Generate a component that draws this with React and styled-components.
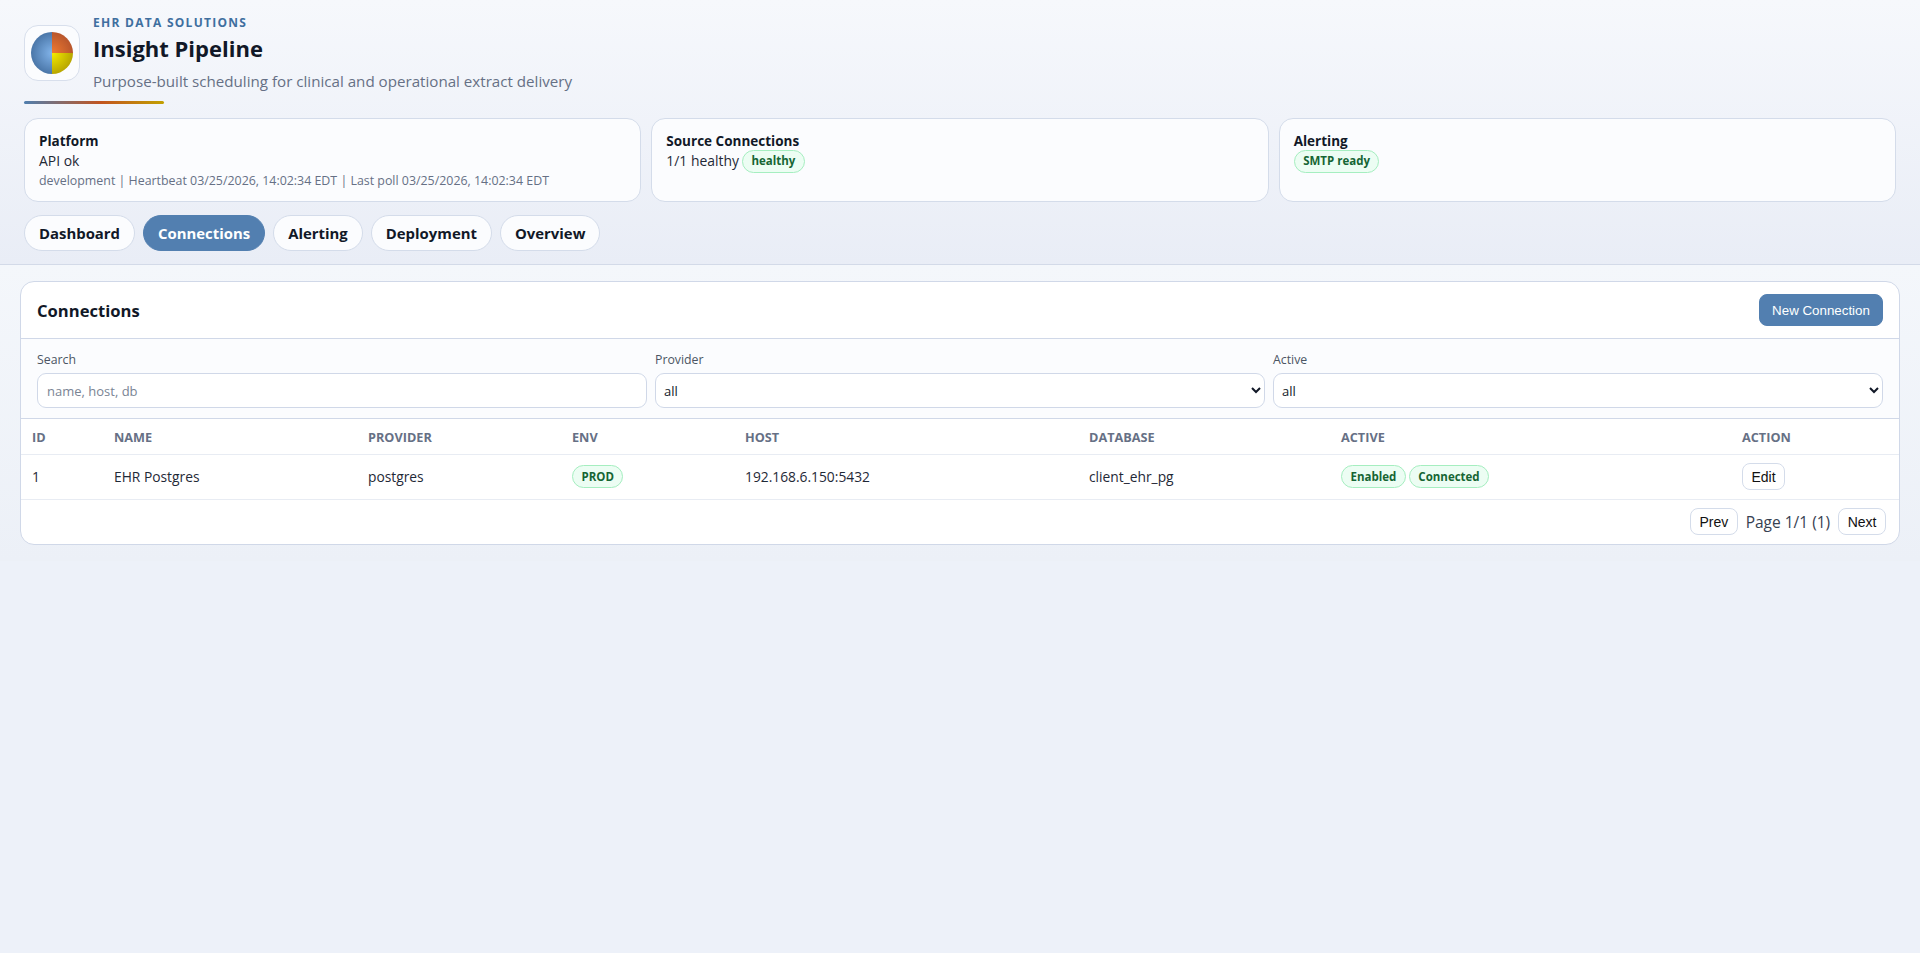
import styled, { createGlobalStyle } from "styled-components";

const FONT = `"Open Sans", "Noto Sans", Arial, sans-serif`;

const GlobalStyle = createGlobalStyle`
  html, body {
    margin: 0;
    min-height: 100%;
  }
  * {
    box-sizing: border-box;
  }
  body {
    min-height: 953px;
    background: #edf1f9;
    color: #111827;
    font-family: ${FONT};
    font-size: 14px;
  }
`;

const Header = styled.header`
  height: 265px;
  padding: 14px 24px 0;
  border-bottom: 1px solid #d3dae8;
  background: linear-gradient(180deg, #f6f8fc 0%, #e9edf6 100%);
`;

const Brand = styled.div`
  display: flex;
  align-items: center;
  gap: 13px;
`;

const LogoTile = styled.div`
  width: 56px;
  height: 56px;
  display: flex;
  align-items: center;
  justify-content: center;
  flex: none;
  background: #fbfcfe;
  border: 1px solid #d8dfec;
  border-radius: 14px;
`;

const Eyebrow = styled.div`
  font-size: 12px;
  line-height: 18px;
  font-weight: 700;
  letter-spacing: 1.27px;
  color: #3f6f9f;
`;

const Title = styled.h1`
  margin: 0;
  font-size: 22px;
  line-height: 32px;
  font-weight: 700;
  color: #111827;
`;

const Subtitle = styled.div`
  margin-top: 7px;
  font-size: 15.15px;
  line-height: 20px;
  color: #667085;
`;

const Accent = styled.div`
  width: 140px;
  height: 3px;
  margin-top: 10px;
  border-radius: 99px;
  background: linear-gradient(90deg, #4f7eae 0%, #c2541f 55%, #c2a000 100%);
`;

const StatusRow = styled.div`
  display: grid;
  grid-template-columns: repeat(3, 1fr);
  gap: 10px;
  margin-top: 14px;
`;

const StatusCard = styled.section`
  height: 84px;
  padding: 12px 14px;
  background: #fbfcfe;
  border: 1px solid #d4dcea;
  border-radius: 14px;
`;

const CardTitle = styled.div`
  font-size: 13.5px;
  line-height: 20px;
  font-weight: 700;
`;

const CardLine = styled.div`
  display: flex;
  align-items: center;
  gap: 3px;
  height: 20px;
  font-size: 13.9px;
  line-height: 20px;
  color: #1f2937;
`;

const CardMeta = styled.div`
  font-size: 12.4px;
  line-height: 20px;
  color: #667085;
`;

const Badge = styled.span`
  display: inline-flex;
  align-items: center;
  height: 23px;
  padding: 0 8.5px;
  background: #ecfdf3;
  border: 1px solid #a5eec0;
  border-radius: 99px;
  font-size: 11.5px;
  font-weight: 700;
  color: #166534;
`;

const Tabs = styled.nav`
  display: flex;
  gap: 8px;
  margin-top: 13px;
`;

const Tab = styled.button`
  height: 36px;
  padding: 0 14px;
  background: ${(p) => (p.$active ? "#527fb0" : "#fbfcfe")};
  border: 1px solid ${(p) => (p.$active ? "#527fb0" : "#d4dcea")};
  border-radius: 18px;
  font-family: ${FONT};
  font-size: 14.9px;
  font-weight: 700;
  color: ${(p) => (p.$active ? "#ffffff" : "#111827")};
`;

const Main = styled.main`
  padding: 16px 20px;
  background: linear-gradient(180deg, #f4f7fb 0%, #ecf0f7 100%);
`;

const Panel = styled.section`
  background: #ffffff;
  border: 1px solid #d0d8e8;
  border-radius: 14px;
  overflow: hidden;
`;

const PanelHead = styled.div`
  height: 57px;
  display: flex;
  align-items: center;
  justify-content: space-between;
  padding: 0 16px;
  border-bottom: 1px solid #d0d8e8;
`;

const PanelTitle = styled.h2`
  margin: 0;
  font-size: 16.6px;
  font-weight: 700;
`;

const PrimaryButton = styled.button`
  width: 124px;
  height: 32px;
  padding: 0;
  background: #527fb0;
  border: 1px solid #527fb0;
  border-radius: 8px;
  font-family: "Liberation Sans", Arial, sans-serif;
  font-size: 13.33px;
  color: #ffffff;
`;

const Filters = styled.div`
  height: 80px;
  display: grid;
  grid-template-columns: repeat(3, 1fr);
  gap: 8px;
  padding: 11px 16px 0;
  background: #fbfcfe;
  border-bottom: 1px solid #d0d8e8;
`;

const Field = styled.label`
  display: flex;
  flex-direction: column;
  gap: 3px;
  font-size: 12.3px;
  line-height: 20px;
  color: #4b5563;
`;

const TextInput = styled.input`
  height: 35px;
  padding: 0 9px;
  background: #ffffff;
  border: 1px solid #d0d8e8;
  border-radius: 9px;
  font-family: ${FONT};
  font-size: 13px;
  outline: none;
  &::placeholder {
    color: #7a8494;
  }
`;

const Select = styled.select`
  height: 35px;
  padding: 0 4px;
  background: #ffffff;
  border: 1px solid #d0d8e8;
  border-radius: 9px;
  font-family: ${FONT};
  font-size: 13px;
  color: #111827;
`;

const Table = styled.table`
  width: 100%;
  table-layout: fixed;
  border-collapse: collapse;
`;

const Th = styled.th`
  height: 35px;
  padding: 2px 11px 0;
  text-align: left;
  font-size: 12.7px;
  font-weight: 700;
  color: #667085;
  text-transform: uppercase;
  border-bottom: 1px solid #e8ecf3;
`;

const Td = styled.td`
  height: 45px;
  padding: 0 11px;
  font-size: 13.8px;
  color: #1f2937;
  border-bottom: 1px solid #e8ecf3;
`;

const BadgeGroup = styled.div`
  display: flex;
  gap: 3px;
`;

const SmallButton = styled.button`
  height: 27px;
  padding: 0 8.5px;
  background: #ffffff;
  border: 1px solid #d4dcea;
  border-radius: 8px;
  font-family: "Liberation Sans", Arial, sans-serif;
  font-size: 14px;
  color: #111111;
`;

const Pager = styled.div`
  height: 44px;
  display: flex;
  align-items: center;
  justify-content: flex-end;
  gap: 8px;
  padding: 0 13px;
  font-size: 15.5px;
  color: #374151;
`;

function Logo() {
  return (
    <svg width="44" height="44" viewBox="0 0 44 44">
      <defs>
        <radialGradient id="blue" gradientUnits="userSpaceOnUse" cx="22" cy="22" r="21">
          <stop offset="0" stopColor="#82b4ea" />
          <stop offset="1" stopColor="#4a76a8" />
        </radialGradient>
        <radialGradient id="orange" gradientUnits="userSpaceOnUse" cx="22" cy="22" r="21">
          <stop offset="0" stopColor="#f07a30" />
          <stop offset="1" stopColor="#b8562c" />
        </radialGradient>
        <radialGradient id="yellow" gradientUnits="userSpaceOnUse" cx="22" cy="22" r="21">
          <stop offset="0" stopColor="#f4ec00" />
          <stop offset="1" stopColor="#b8a600" />
        </radialGradient>
      </defs>
      <path d="M22 1 A21 21 0 0 0 22 43 Z" fill="url(#blue)" />
      <path d="M22 1 A21 21 0 0 1 43 22 L22 22 Z" fill="url(#orange)" />
      <path d="M43 22 A21 21 0 0 1 22 43 L22 22 Z" fill="url(#yellow)" />
    </svg>
  );
}

const columns = [82, 254, 204, 173, 344, 252, 401, 168];

export default function App() {
  return (
    <>
      <GlobalStyle />
      <Header>
        <Brand>
          <LogoTile>
            <Logo />
          </LogoTile>
          <div>
            <Eyebrow>EHR DATA SOLUTIONS</Eyebrow>
            <Title>Insight Pipeline</Title>
            <Subtitle>Purpose-built scheduling for clinical and operational extract delivery</Subtitle>
          </div>
        </Brand>
        <Accent />
        <StatusRow>
          <StatusCard>
            <CardTitle>Platform</CardTitle>
            <CardLine>API ok</CardLine>
            <CardMeta>development | Heartbeat 03/25/2026, 14:02:34 EDT | Last poll 03/25/2026, 14:02:34 EDT</CardMeta>
          </StatusCard>
          <StatusCard>
            <CardTitle>Source Connections</CardTitle>
            <CardLine>
              1/1 healthy <Badge>healthy</Badge>
            </CardLine>
          </StatusCard>
          <StatusCard>
            <CardTitle>Alerting</CardTitle>
            <CardLine>
              <Badge>SMTP ready</Badge>
            </CardLine>
          </StatusCard>
        </StatusRow>
        <Tabs>
          <Tab>Dashboard</Tab>
          <Tab $active>Connections</Tab>
          <Tab>Alerting</Tab>
          <Tab>Deployment</Tab>
          <Tab>Overview</Tab>
        </Tabs>
      </Header>
      <Main>
        <Panel>
          <PanelHead>
            <PanelTitle>Connections</PanelTitle>
            <PrimaryButton>New Connection</PrimaryButton>
          </PanelHead>
          <Filters>
            <Field>
              Search
              <TextInput placeholder="name, host, db" />
            </Field>
            <Field>
              Provider
              <Select>
                <option>all</option>
              </Select>
            </Field>
            <Field>
              Active
              <Select>
                <option>all</option>
              </Select>
            </Field>
          </Filters>
          <Table>
            <colgroup>
              {columns.map((w, i) => (
                <col key={i} width={w} />
              ))}
            </colgroup>
            <thead>
              <tr>
                <Th>Id</Th>
                <Th>Name</Th>
                <Th>Provider</Th>
                <Th>Env</Th>
                <Th>Host</Th>
                <Th>Database</Th>
                <Th>Active</Th>
                <Th>Action</Th>
              </tr>
            </thead>
            <tbody>
              <tr>
                <Td>1</Td>
                <Td>EHR Postgres</Td>
                <Td>postgres</Td>
                <Td>
                  <Badge>PROD</Badge>
                </Td>
                <Td>192.168.6.150:5432</Td>
                <Td>client_ehr_pg</Td>
                <Td>
                  <BadgeGroup>
                    <Badge>Enabled</Badge>
                    <Badge>Connected</Badge>
                  </BadgeGroup>
                </Td>
                <Td>
                  <SmallButton>Edit</SmallButton>
                </Td>
              </tr>
            </tbody>
          </Table>
          <Pager>
            <SmallButton>Prev</SmallButton>
            Page 1/1 (1)
            <SmallButton>Next</SmallButton>
          </Pager>
        </Panel>
      </Main>
    </>
  );
}
